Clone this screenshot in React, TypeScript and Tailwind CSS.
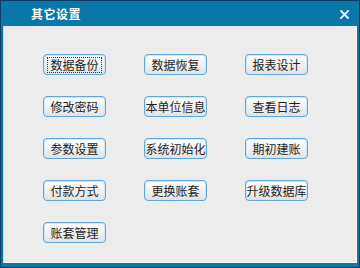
import React from 'react';

const items = [
  '数据备份', '数据恢复', '报表设计',
  '修改密码', '本单位信息', '查看日志',
  '参数设置', '系统初始化', '期初建账',
  '付款方式', '更换账套', '升级数据库',
  '账套管理',
];

export default function App() {
  return (
    <div
      className="w-[360px] h-[268px] border border-[#0c3b63] bg-[#0a77a9] flex flex-col"
      style={{ fontFamily: '"Noto Sans CJK SC", "Noto Sans", sans-serif' }}
    >
      {/* title bar */}
      <div className="h-[25px] flex items-center justify-between pl-[30px] pr-[10px] shrink-0">
        <span className="text-white text-[12px] font-bold tracking-[0.5px] leading-none">其它设置</span>
        <svg width="9" height="9" viewBox="0 0 9 9" className="mt-[1px]">
          <path d="M1 1 L8 8 M8 1 L1 8" stroke="white" strokeWidth="1.8" strokeLinecap="square" />
        </svg>
      </div>

      {/* content */}
      <div className="flex-1 px-[2px] pb-[4px]">
        <div className="h-full bg-[#ececec] border-l border-[#c9d7e0] border-r border-b border-r-[#f4f6f8] border-b-[#f4f6f8] pl-[39px] pt-[28px]">
          <div className="grid grid-cols-[repeat(3,63px)] auto-rows-[21px] gap-x-[38px] gap-y-[21px]">
            {items.map((t, i) => (
              <button
                key={t}
                className="rounded-[4px] border border-[#5ea9d6] bg-gradient-to-b from-[#ffffff] to-[#e2e2e2] shadow-[inset_0_0_0_1px_#cfe6f4] text-[12px] leading-none text-[#1e1e1e] flex items-center justify-center"
              >
                <span className={i === 0 ? 'outline outline-1 outline-dotted outline-[#333] outline-offset-[1px] px-[1px]' : ''}>
                  {t}
                </span>
              </button>
            ))}
          </div>
        </div>
      </div>
    </div>
  );
}
